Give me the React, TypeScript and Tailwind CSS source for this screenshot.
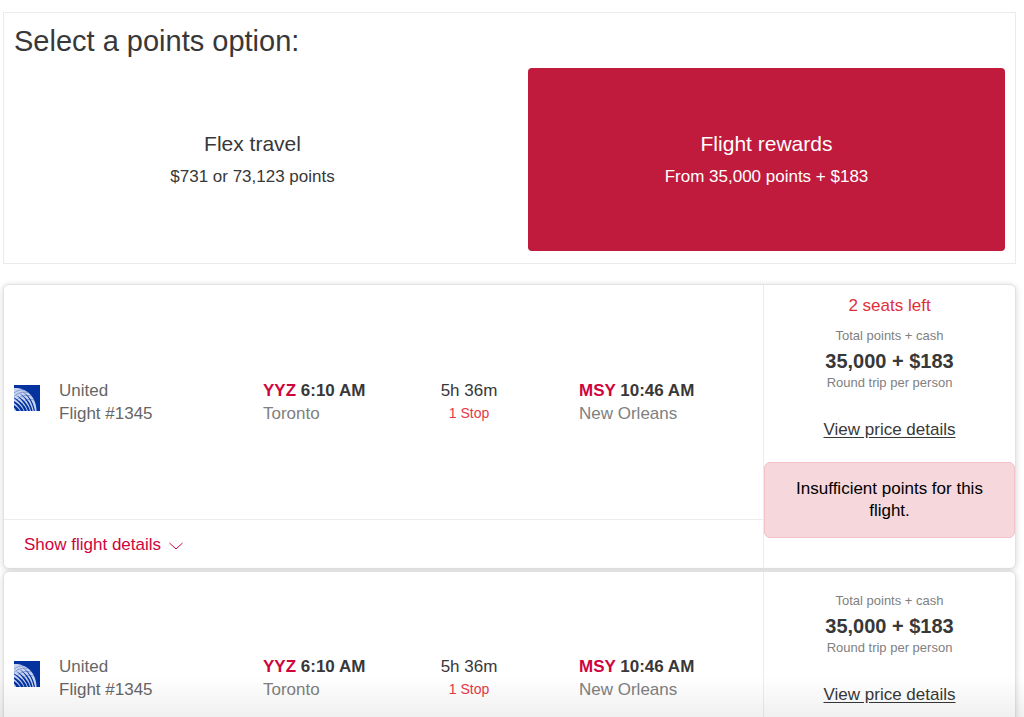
import React from "react";

type Flight = {
  id: number;
  airline: string;
  number: string;
  from: string;
  fromCity: string;
  departs: string;
  to: string;
  toCity: string;
  arrives: string;
  duration: string;
  stops: string;
  price: string;
  seats?: string;
};

const base = {
  airline: "United",
  number: "Flight #1345",
  from: "YYZ",
  fromCity: "Toronto",
  departs: "6:10 AM",
  to: "MSY",
  toCity: "New Orleans",
  arrives: "10:46 AM",
  duration: "5h 36m",
  stops: "1 Stop",
  price: "35,000 + $183",
};

const flights: Flight[] = [
  { id: 1, ...base, seats: "2 seats left" },
  { id: 2, ...base },
];

function AirlineLogo() {
  return (
    <svg viewBox="0 0 26 26" className="mt-1.5 size-[26px] shrink-0" role="img" aria-label="United">
      <rect width="26" height="26" fill="#0433a0" />
      <path d="M0 3C11 2.500 22 10 22.500 26H0Z" fill="#c9d5f0" />
      <g fill="#0433a0">
        <path d="M8 6.500C14 9.500 19.500 16 21 26H19.800C18 17 14 10.500 8 6.500Z" />
        <path d="M5 8C12 12 17 18 18.600 26H17C15 19 11 12.500 5 8Z" />
        <path d="M2 10C9 14 14.500 19.500 16 26H14C12 20.500 8 14.500 2 10Z" />
        <path d="M0 12.500C6 16 11.500 20.500 13 26H10.500C9 22 6 17.500 0 13.500Z" />
        <path d="M0 16C5 19 8.500 22.500 9.800 26H6.800C5.500 23.200 3 20 0 18Z" />
        <path d="M0 20C3 22 5 24.200 6 26H2.300C1.800 25 1 23.700 0 22.800Z" />
      </g>
      <g fill="none" stroke="#0433a0" strokeWidth="0.5" opacity="0.7">
        <path d="M0 8C3 5.500 7 4.500 10 5" />
        <path d="M0 11.500C4 7.500 9 6.500 14 7.500" />
        <path d="M3 15C7 10.500 12 9.500 17 11" />
        <path d="M8 19C11 14.500 15 13.500 20 15" />
      </g>
    </svg>
  );
}

function FlightCard({ flight }: { flight: Flight }) {
  return (
    <article className="flex rounded-md border border-[#e2e2e2] bg-white shadow-[0_1px_6px_rgba(0,0,0,0.16)]">
      <div className="flex min-w-0 flex-1 flex-col">
        <div className="flex flex-1 items-center pl-2.5">
          <div className="flex w-[249px] items-start gap-[19px]">
            <AirlineLogo />
            <div className="text-[#666]">
              <p>{flight.airline}</p>
              <p>{flight.number}</p>
            </div>
          </div>
          <div className="w-[156px]">
            <p className="font-bold">
              <span className="text-[#d0043c]">{flight.from}</span> {flight.departs}
            </p>
            <p className="text-[#808080]">{flight.fromCity}</p>
          </div>
          <div className="w-[100px] text-center">
            <p>{flight.duration}</p>
            <p className="text-sm leading-[23px] text-[#e63946]">{flight.stops}</p>
          </div>
          <div className="ml-[60px] flex-1">
            <p className="font-bold">
              <span className="text-[#d0043c]">{flight.to}</span> {flight.arrives}
            </p>
            <p className="text-[#808080]">{flight.toCity}</p>
          </div>
        </div>
        <div className="flex h-[49px] items-center border-t border-[#ececec] pl-5">
          <button type="button" className="flex items-center gap-2 text-[#d0043c]">
            Show flight details
            <svg viewBox="0 0 14 8" className="mt-1 h-2 w-3.5" fill="none" stroke="currentColor" aria-hidden="true">
              <path d="M0.500 1L7 7L13.500 1" />
            </svg>
          </button>
        </div>
      </div>
      <div className="w-[252px] shrink-0 border-l border-[#ececec] pb-[30px] pt-2.5 text-center">
        {flight.seats && <p className="leading-[22px] text-[#e0303a]">{flight.seats}</p>}
        <p className="pt-2 text-[13px] leading-[21px] text-[#808080]">Total points + cash</p>
        <p className="text-xl leading-[30px] font-bold">{flight.price}</p>
        <p className="text-[13px] leading-[14px] text-[#808080]">Round trip per person</p>
        <a href="#price" className="mt-7 inline-block leading-[23px] underline underline-offset-2">
          View price details
        </a>
        <p className="mt-[21px] rounded-md border border-[#f4c3c9] bg-[#f6d8dc] px-5 py-[15px] leading-[22px] text-black">
          Insufficient points for this flight.
        </p>
      </div>
    </article>
  );
}

export default function App() {
  return (
    <main className="min-h-screen bg-white pt-3 pr-2 pl-[3px] font-['Liberation_Sans',Arial,sans-serif] text-[17px] leading-[23px] text-[#383838]">
      <section className="border border-[#ebebeb] px-2.5 pt-2 pb-3">
        <h1 className="text-[29px] leading-10">Select a points option:</h1>
        <div className="mt-[7px] grid grid-cols-2 gap-[37px]">
          <button type="button" className="flex h-[183px] flex-col items-center justify-center gap-2.5 rounded">
            <span className="text-[21px]">Flex travel</span>
            <span>$731 or 73,123 points</span>
          </button>
          <button
            type="button"
            className="flex h-[183px] flex-col items-center justify-center gap-2.5 rounded bg-[#c01a3c] text-white"
          >
            <span className="text-[21px]">Flight rewards</span>
            <span>From 35,000 points + $183</span>
          </button>
        </div>
      </section>
      <section className="mt-5 flex flex-col gap-0.5" aria-label="Flights">
        {flights.map((flight) => (
          <FlightCard key={flight.id} flight={flight} />
        ))}
      </section>
      <div className="pointer-events-none fixed inset-x-0 bottom-0 h-10 bg-linear-to-b from-transparent to-black/6" />
    </main>
  );
}
